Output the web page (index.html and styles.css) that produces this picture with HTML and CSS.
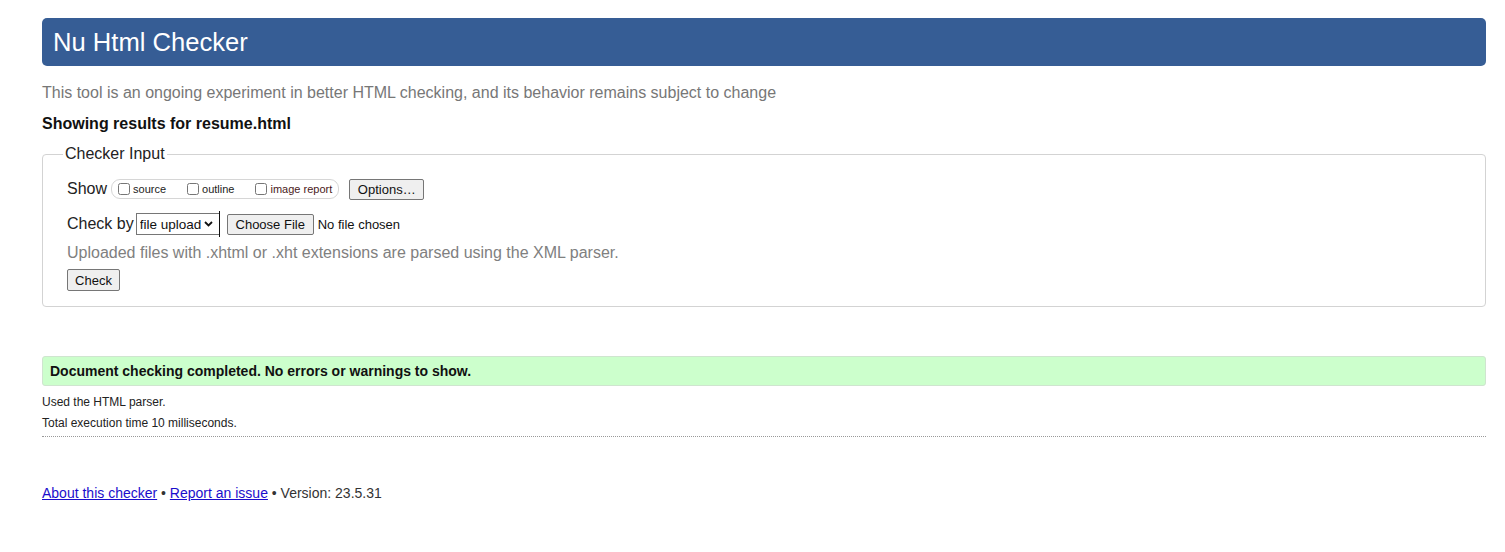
FILE: index.html
```html
<!DOCTYPE html>
<html lang="en">
<head>
<meta charset="utf-8">
<title>Showing results for resume.html - Nu Html Checker</title>
<link rel="stylesheet" href="styles.css">
</head>
<body>
<div class="page">
  <h1 class="title">Nu Html Checker</h1>
  <p class="intro">This tool is an ongoing experiment in better HTML checking, and its behavior remains subject to change</p>
  <h2 class="showing">Showing results for resume.html</h2>
  <fieldset class="input-box">
    <legend class="input-legend">Checker Input</legend>
    <div class="row show-row">
      <span class="row-label">Show</span>
      <div class="show-group">
        <label class="opt"><input type="checkbox" class="cb"><span>source</span></label>
        <label class="opt"><input type="checkbox" class="cb"><span>outline</span></label>
        <label class="opt"><input type="checkbox" class="cb"><span class="img-report">image report</span></label>
      </div>
      <button class="btn options-btn" type="button">Options…</button>
    </div>
    <div class="row check-row">
      <span class="row-label">Check by</span>
      <span class="select-wrap">
        <select class="sel"><option>file upload</option></select>
        <svg class="chev" width="9" height="6" viewBox="0 0 9 6" aria-hidden="true"><path d="M1 1 L4.5 4.5 L8 1" fill="none" stroke="#111" stroke-width="1.8"/></svg>
      </span>
      <button class="btn file-btn" type="button">Choose File</button>
      <span class="nofile">No file chosen</span>
    </div>
    <p class="hint">Uploaded files with .xhtml or .xht extensions are parsed using the XML parser.</p>
    <button class="btn check-btn" type="button">Check</button>
  </fieldset>
  <p class="success">Document checking completed. No errors or warnings to show.</p>
  <p class="details">Used the HTML parser.</p>
  <p class="details">Total execution time 10 milliseconds.</p>
  <hr class="sep">
  <p class="footer"><a href="#">About this checker</a> • <a href="#">Report an issue</a> • Version: 23.5.31</p>
</div>
</body>
</html>
```
FILE: styles.css
```css
html, body {
  margin: 0;
  padding: 0;
  background: #fff;
}
body {
  font-family: "Liberation Sans", Arial, sans-serif;
  color: #111;
}
.page {
  padding: 18px 19px 0 42px;
}
.title {
  margin: 0;
  height: 48px;
  line-height: 48px;
  padding: 0 11px;
  background: #365d95;
  color: #fff;
  font-size: 25.6px;
  font-weight: normal;
  border-radius: 5px;
}
.intro {
  margin: 17px 0 0;
  font-size: 16px;
  line-height: 20px;
  color: #777;
}
.showing {
  margin: 11px 0 0;
  font-size: 16px;
  line-height: 20px;
  font-weight: bold;
  color: #111;
}
.input-box {
  margin: 11px 0 0;
  padding: 14px 0 14px 24px;
  border: 1px solid #d3d3d3;
  border-radius: 4px;
  height: 132px;
  box-sizing: content-box;
}
.input-legend {
  font-size: 16px;
  padding: 0 2px;
  margin-left: -4px;
  color: #222;
}
.row {
  display: flex;
  align-items: center;
}
.row-label {
  font-size: 16px;
  color: #222;
}
.show-row {
  height: 24px;
}
.show-group {
  display: flex;
  align-items: center;
  margin-left: 4px;
  height: 18px;
  padding: 0 6px 0 4px;
  border: 1px solid #d6d6d6;
  border-radius: 9px;
}
.opt {
  display: flex;
  align-items: center;
  font-size: 11px;
  color: #222;
  margin-right: 19px;
}
.opt:last-child {
  margin-right: 0;
}
.cb {
  width: 12px;
  height: 12px;
  margin: 0 3px 0 2px;
}
.img-report {
  color: #4a1a1a;
}
.btn {
  font-family: "Liberation Sans", Arial, sans-serif;
  font-size: 13px;
  color: #111;
  background: #efefef;
  border: 1px solid #767676;
  border-radius: 2px;
  padding: 0 6px;
  height: 21px;
}
.options-btn {
  margin-left: 10px;
  width: 75px;
}
.check-row {
  margin-top: 10px;
  height: 26px;
}
.select-wrap {
  position: relative;
  margin-left: 2px;
  display: inline-flex;
  align-items: center;
  border-right: 1px solid #111;
  height: 26px;
}
.sel {
  -webkit-appearance: none;
  appearance: none;
  font-family: "Liberation Sans", Arial, sans-serif;
  font-size: 13.5px;
  height: 22px;
  width: 83px;
  border: 1px solid #767676;
  border-right: 0;
  border-radius: 0;
  background: #fff;
  color: #111;
  padding: 0 0 0 3px;
  margin: 0;
}
.chev {
  position: absolute;
  right: 6px;
  top: 10px;
  pointer-events: none;
}
.file-btn {
  margin-left: 7px;
  width: 87px;
  height: 21px;
}
.nofile {
  font-size: 13px;
  margin-left: 4px;
  color: #111;
}
.hint {
  margin: 6px 0 0;
  font-size: 16px;
  line-height: 20px;
  color: #808080;
}
.check-btn {
  margin-top: 6px;
  width: 53px;
  height: 22px;
}
.success {
  margin: 49px 0 0;
  height: 28px;
  line-height: 28px;
  padding: 0 7px;
  background: #ccffcc;
  border: 1px solid #cfe5cf;
  border-radius: 3px;
  font-size: 14px;
  font-weight: bold;
  color: #111;
}
.details {
  margin: 9px 0 0;
  font-size: 12px;
  line-height: 15px;
  color: #222;
}
.details + .details {
  margin-top: 6px;
}
.sep {
  margin: 5px 0 0;
  border: 0;
  border-top: 1px dotted #999;
  height: 0;
}
.footer {
  margin: 47px 0 0;
  font-size: 14px;
  line-height: 18px;
  color: #333;
}
.footer a {
  color: #1a0dcc;
  text-decoration: underline;
}
```
